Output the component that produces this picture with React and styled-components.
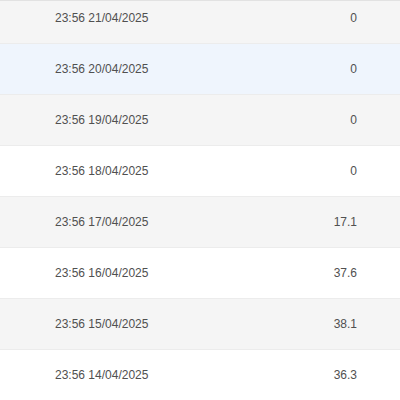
import React from 'react';
import styled, { createGlobalStyle } from 'styled-components';

const GlobalStyle = createGlobalStyle`
  body {
    margin: 0;
    background: #fff;
    font-family: 'Liberation Sans', Arial, sans-serif;
  }
`;

const Frame = styled.div`
  height: 400px;
  overflow: hidden;
  border-top: 1px solid #e2e2e2;
`;

const Table = styled.div`
  margin-top: -8px;
`;

const Row = styled.div`
  display: flex;
  align-items: center;
  height: 50px;
  border-bottom: 1px solid #ececec;
  background: ${p => (p.$active ? '#eff5fd' : p.$striped ? '#f5f5f5' : '#fff')};
  color: #505050;
  font-size: 12px;
`;

const DateCell = styled.div`
  flex: 1;
  padding-left: 55px;
`;

const ValueCell = styled.div`
  width: 120px;
  padding-right: 43px;
  text-align: right;
`;

const rows = [
  ['23:56 21/04/2025', '0'],
  ['23:56 20/04/2025', '0'],
  ['23:56 19/04/2025', '0'],
  ['23:56 18/04/2025', '0'],
  ['23:56 17/04/2025', '17.1'],
  ['23:56 16/04/2025', '37.6'],
  ['23:56 15/04/2025', '38.1'],
  ['23:56 14/04/2025', '36.3'],
];

export default function App() {
  return (
    <>
      <GlobalStyle />
      <Frame>
        <Table>
          {rows.map(([date, value], i) => (
            <Row key={date} $striped={i % 2 === 0} $active={i === 1}>
              <DateCell>{date}</DateCell>
              <ValueCell>{value}</ValueCell>
            </Row>
          ))}
        </Table>
      </Frame>
    </>
  );
}
